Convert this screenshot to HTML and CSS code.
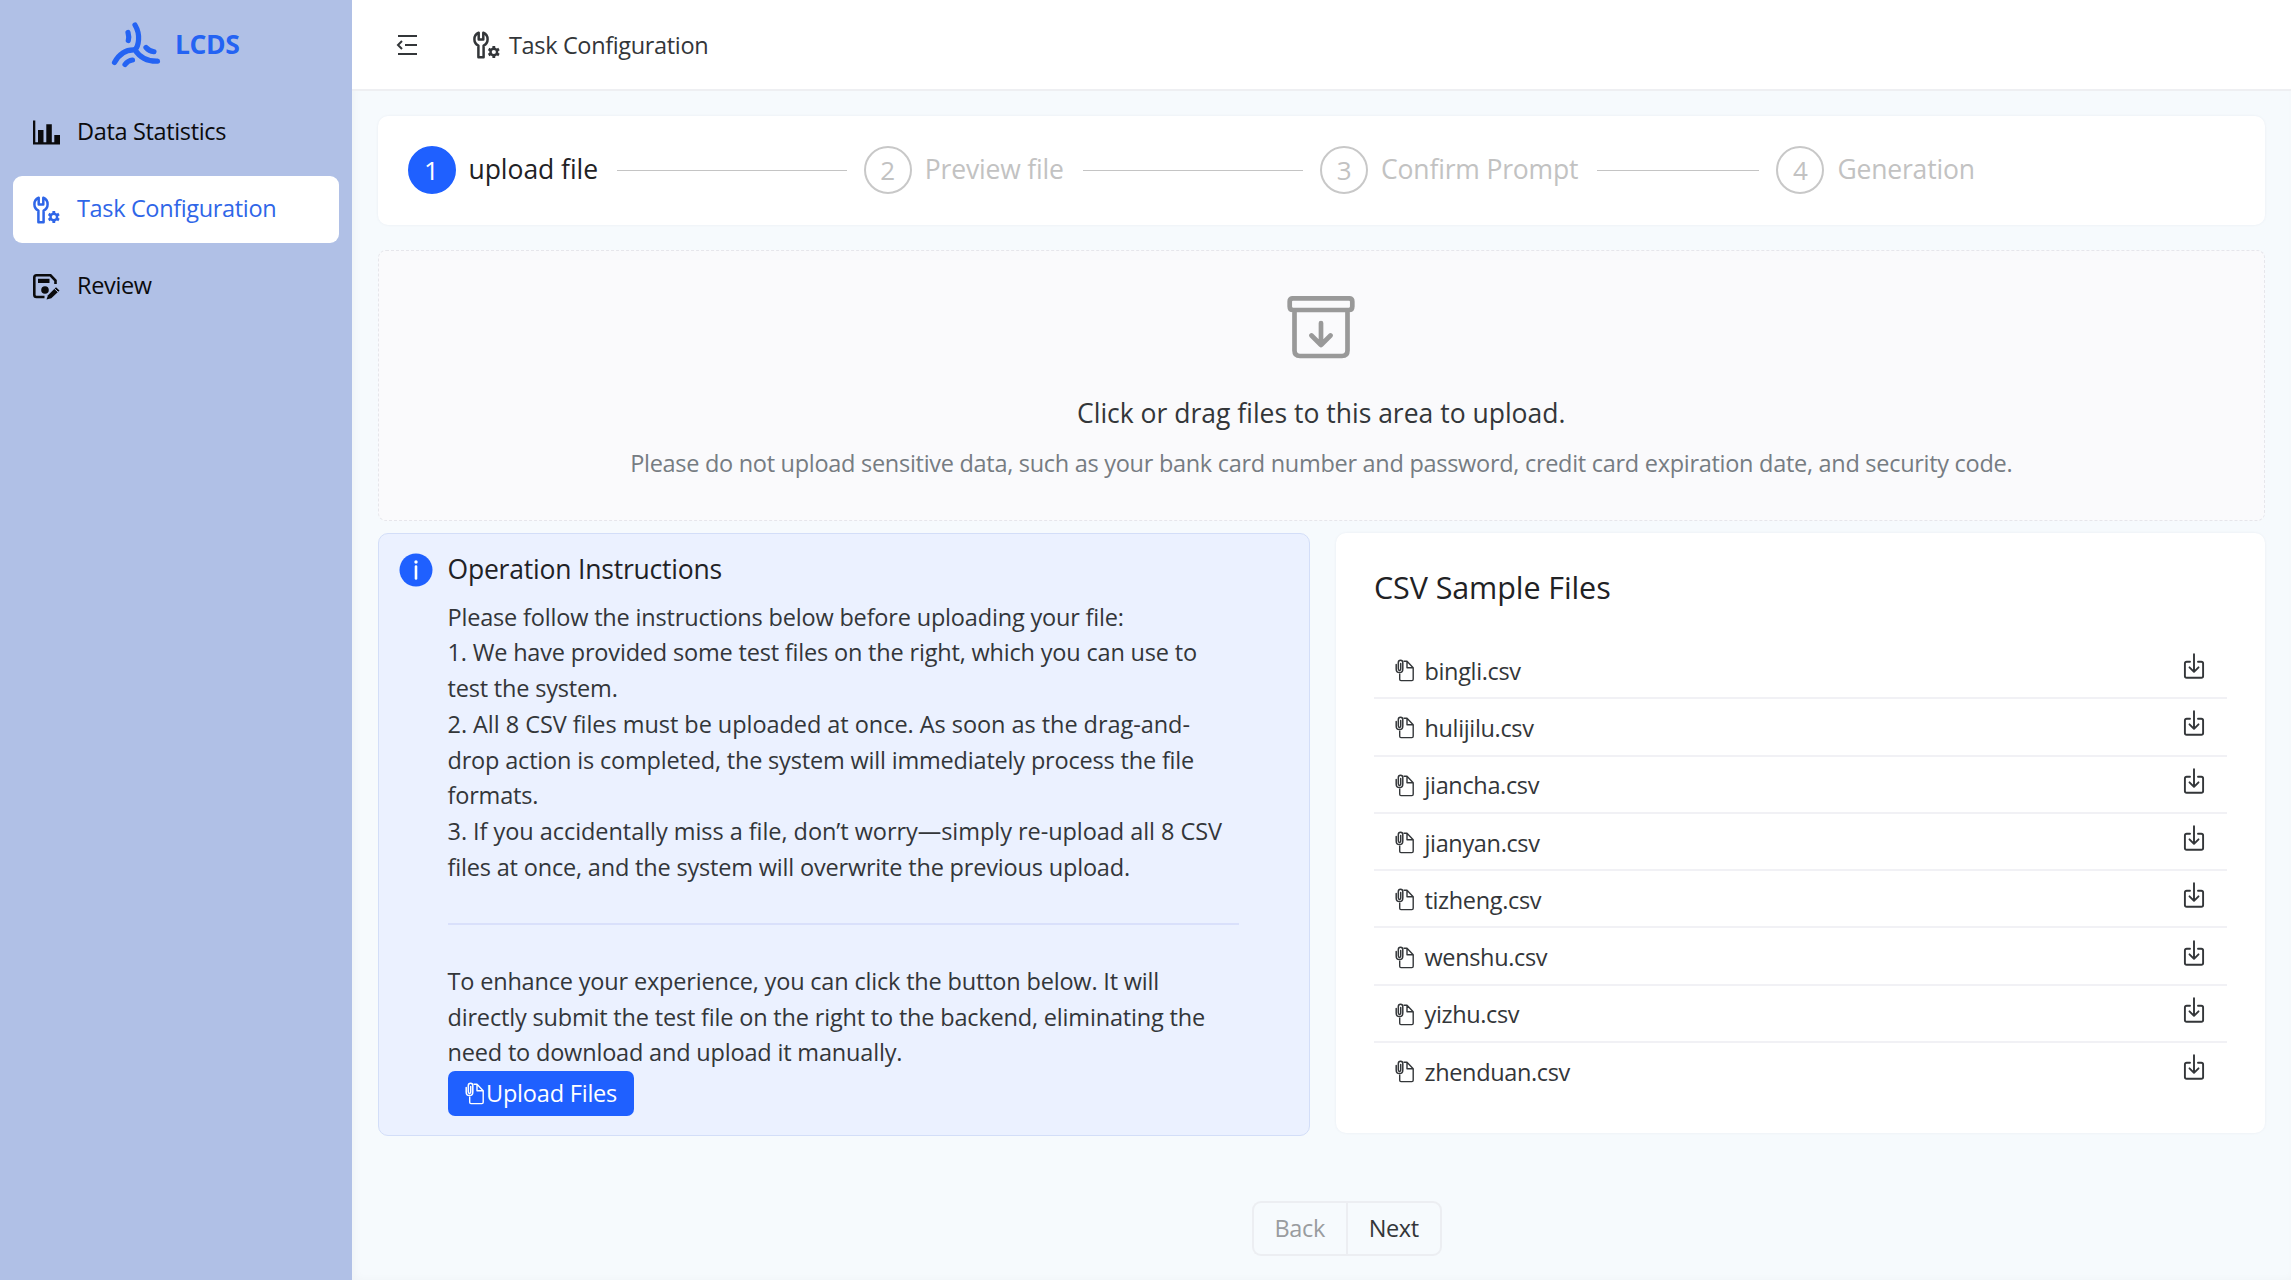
FILE: index.html
```html
<!DOCTYPE html>
<html lang="en">
<head>
<meta charset="utf-8">
<title>LCDS - Task Configuration</title>
<link rel="stylesheet" href="styles.css">
</head>
<body>
<svg class="defs" width="0" height="0" aria-hidden="true">
  <symbol id="wrench" viewBox="0 0 27 28">
    <path d="M5.4 26.2V14.6C2.9 13.3 1.4 11 1.4 8.2 1.4 5.400 3 2.900 5.700 1.700V8.600H10.300V1.700C13 2.900 14.600 5.400 14.600 8.200 14.600 11 13.100 13.300 10.600 14.600V26.200Z" fill="none" stroke="currentColor" stroke-width="2.5" stroke-linejoin="round"/>
    <circle cx="20.800" cy="21" r="3.300" fill="none" stroke="currentColor" stroke-width="2.400"/>
    <path d="M20.800 15V17.400M20.800 24.600V27M15.600 18L17.700 19.200M23.900 22.800L26 24M15.600 24L17.700 22.800M23.900 19.200L26 18" stroke="currentColor" stroke-width="2.800"/>
  </symbol>
  <symbol id="file" viewBox="0 0 20 23">
    <path d="M8.500 2.300H12L18.200 8.700V20.300Q18.200 21.600 16.900 21.600H6Q4.700 21.600 4.700 20.300V14.500M12 2.500V8.700H18" fill="none" stroke="currentColor" stroke-width="1.400" stroke-linejoin="round"/>
    <path d="M1.200 5.500V10C1.200 14.800 7.800 14.800 7.800 10V3.800C7.800.400 3.300 .400 3.300 3.800V9.800C3.300 12 5.700 12 5.700 9.800V4.500" fill="none" stroke="currentColor" stroke-width="1.500" stroke-linecap="round"/>
  </symbol>
  <symbol id="download" viewBox="0 0 22 27">
    <path d="M7 8.800H3.700Q1.900 8.800 1.900 10.600V22.900Q1.900 24.700 3.700 24.700H18.300Q20.100 24.700 20.100 22.900V10.600Q20.100 8.800 18.300 8.800H15M11 1.300V18.500M6.500 14.300L11 18.800L15.500 14.300" fill="none" stroke="currentColor" stroke-width="1.900" stroke-linecap="round" stroke-linejoin="round"/>
  </symbol>
</svg>
<div class="app">
  <aside class="sidebar">
    <div class="brand">
      <svg class="logo" viewBox="110 20 52 50"><path d="M135 25C141 35 138.500 46 135 50M114.500 62.500C120 52.500 127 49.500 135 50C141 59 149 61.500 157.500 61.200M128 32.500Q129.300 37 128.300 40.500M146 47.500Q149 51 154 51.700M125 64.500Q128 60.500 132.500 60" fill="none" stroke="currentColor" stroke-width="5.200" stroke-linecap="round"/></svg>
      <span class="brand-name">LCDS</span>
    </div>
    <nav class="menu">
      <a class="item"><svg class="mi" viewBox="0 0 27 28"><path d="M0 1.500H2.300V23.200H5V11H10.500V23.200H13.300V5.300H18.800V23.200H21.300V16H27V25.500H0Z" fill="currentColor"/></svg><span>Data Statistics</span></a>
      <a class="item active"><svg class="mi"><use href="#wrench"/></svg><span>Task Configuration</span></a>
      <a class="item"><svg class="mi" viewBox="0 0 27 28"><path d="M11.500 24H3.500Q1.300 24 1.300 21.800V4.500Q1.300 2.300 3.500 2.300H17.500L22.500 7.500V11" fill="none" stroke="currentColor" stroke-width="2.600"/><path d="M5 5.800H16.500V10H5Z" fill="currentColor"/><circle cx="12" cy="17" r="3.800" fill="currentColor"/><path d="M13.500 26.500L15 22.200L23 14.200L26.500 17.500L18.300 25.300Z" fill="currentColor"/><path d="M21.300 15.500L25 19" stroke="#b0c0e6" stroke-width="1"/></svg><span>Review</span></a>
    </nav>
  </aside>
  <div class="main">
    <header class="header">
      <svg class="collapse" viewBox="0 0 22 22"><path d="M2 2H21M9 11H21M2 20H21" stroke="currentColor" stroke-width="2.200"/><path d="M6 7L2 11L6 15" fill="none" stroke="currentColor" stroke-width="2"/></svg>
      <div class="crumb"><svg class="mi"><use href="#wrench"/></svg><span>Task Configuration</span></div>
    </header>
    <div class="content">
      <section class="steps card">
        <div class="step current"><b>1</b><span>upload file</span><i></i></div>
        <div class="step"><b>2</b><span>Preview file</span><i></i></div>
        <div class="step"><b>3</b><span>Confirm Prompt</span><i></i></div>
        <div class="step"><b>4</b><span>Generation</span></div>
      </section>
      <section class="dropzone">
        <svg class="box" viewBox="0 0 68 64"><path d="M6 2.300H62Q65.300 2.300 65.300 5.600V10.500Q65.300 14 62 14H6Q2.700 14 2.700 10.500V5.600Q2.700 2.300 6 2.300ZM7.500 14V54.500Q7.500 60 13 60H55Q60.500 60 60.500 54.500V14M34 27V49M24.500 39.500L34 49L43.500 39.500" fill="none" stroke="currentColor" stroke-width="4.700" stroke-linecap="round" stroke-linejoin="round"/></svg>
        <div class="drop-title">Click or drag files to this area to upload.</div>
        <div class="drop-note">Please do not upload sensitive data, such as your bank card number and password, credit card expiration date, and security code.</div>
      </section>
      <div class="columns">
        <section class="notice">
          <svg class="info" viewBox="0 0 34 34"><circle cx="17" cy="17" r="16.500" fill="#1f60ff"/><circle cx="17" cy="9" r="1.700" fill="#fff"/><path d="M17 13.500V25.500" stroke="#fff" stroke-width="2.600" stroke-linecap="round"/></svg>
          <div class="notice-body">
            <h2>Operation Instructions</h2>
            <p><span>Please follow the instructions below before uploading your file:</span><span>1. We have provided some test files on the right, which you can use to</span><span>test the system.</span><span class="loose">2. All 8 CSV files must be uploaded at once. As soon as the drag-and-</span><span>drop action is completed, the system will immediately process the file</span><span>formats.</span><span class="loose">3. If you accidentally miss a file, don’t worry—simply re-upload all 8 CSV</span><span>files at once, and the system will overwrite the previous upload.</span></p>
            <hr>
            <p><span>To enhance your experience, you can click the button below. It will</span><span>directly submit the test file on the right to the backend, eliminating the</span><span>need to download and upload it manually.</span></p>
            <button class="upload"><svg class="fi"><use href="#file"/></svg><span>Upload Files</span></button>
          </div>
        </section>
        <section class="samples card">
          <h2>CSV Sample Files</h2>
          <ul>
            <li><svg class="fi"><use href="#file"/></svg><span>bingli.csv</span><svg class="dl"><use href="#download"/></svg></li>
            <li><svg class="fi"><use href="#file"/></svg><span>hulijilu.csv</span><svg class="dl"><use href="#download"/></svg></li>
            <li><svg class="fi"><use href="#file"/></svg><span>jiancha.csv</span><svg class="dl"><use href="#download"/></svg></li>
            <li><svg class="fi"><use href="#file"/></svg><span>jianyan.csv</span><svg class="dl"><use href="#download"/></svg></li>
            <li><svg class="fi"><use href="#file"/></svg><span>tizheng.csv</span><svg class="dl"><use href="#download"/></svg></li>
            <li><svg class="fi"><use href="#file"/></svg><span>wenshu.csv</span><svg class="dl"><use href="#download"/></svg></li>
            <li><svg class="fi"><use href="#file"/></svg><span>yizhu.csv</span><svg class="dl"><use href="#download"/></svg></li>
            <li><svg class="fi"><use href="#file"/></svg><span>zhenduan.csv</span><svg class="dl"><use href="#download"/></svg></li>
          </ul>
        </section>
      </div>
      <div class="pager"><button class="back">Back</button><button class="next">Next</button></div>
    </div>
  </div>
</div>
</body>
</html>
```
FILE: styles.css
```css
* { box-sizing: border-box; }
body { margin: 0; font-family: "Open Sans", "Noto Sans", sans-serif; font-size: 23.5px; letter-spacing: -0.35px; color: #333639; background: #f6fafd; }
.defs { position: absolute; }
h2, p, ul { margin: 0; padding: 0; font-weight: 400; }
button { font: inherit; letter-spacing: inherit; margin: 0; padding: 0; }
svg { flex: none; display: block; }
.app { display: flex; width: 2291px; height: 1280px; overflow: hidden; }
.sidebar { width: 351.5px; flex: none; background: #b0c0e6; color: #0b0b0d; }
.brand { height: 90px; display: flex; align-items: center; padding-left: 110px; color: #2463f3; }
.logo { width: 52px; height: 50px; }
.brand-name { margin-left: 13px; padding-bottom: 3px; font-size: 26.5px; font-weight: 700; letter-spacing: -0.4px; }
.menu { padding: 9px 12.5px 0 13px; display: flex; flex-direction: column; gap: 10px; }
.item { height: 67px; display: flex; align-items: center; gap: 17px; padding-left: 20px; border-radius: 9px; white-space: nowrap; }
.item span { padding-bottom: 3px; }
.item.active { background: #fff; color: #2f66e8; }
.mi { width: 27px; height: 28px; }
.main { flex: 1; min-width: 0; display: flex; flex-direction: column; box-shadow: inset 3px 0 8px rgba(0, 0, 40, .03); }
.header { height: 90.5px; flex: none; background: #fff; border-bottom: 2px solid #eeeff2; display: flex; align-items: center; padding: 1px 0 0 44.5px; }
.collapse { width: 22px; height: 28px; }
.crumb { display: flex; align-items: center; margin-left: 55px; gap: 9px; }
.content { padding: 25px 26px 0; display: flex; flex-direction: column; }
.card { background: #fff; border-radius: 10px; box-shadow: 0 0 3px rgba(20, 40, 80, .06); }
.steps { height: 109px; display: flex; align-items: center; padding: 0 0 1px 30px; }
.step { width: 456.3px; display: flex; align-items: center; color: #c2c2c2; font-size: 26.5px; letter-spacing: -0.18px; white-space: nowrap; }
.step b { width: 48px; height: 48px; flex: none; border: 2px solid #c8c8c8; border-radius: 50%; font-weight: 400; font-size: 26px; display: flex; align-items: center; justify-content: center; letter-spacing: 0; }
.step span { margin-left: 13px; padding-bottom: 1px; }
.step i { flex: 1; height: 1.5px; background: #c4c4c4; margin: 2px 17px 0 19px; }
.step.current { color: #1f2225; letter-spacing: -0.05px; }
.step.current b { background: #1f60ff; border-color: #1f60ff; color: #fff; }
.dropzone { margin-top: 25px; height: 271px; background: #fafafc; border: 1.6px dashed #e6e6eb; border-radius: 8px; display: flex; flex-direction: column; align-items: center; white-space: nowrap; }
.box { width: 68px; height: 64px; margin-top: 45px; color: #999; }
.drop-title { margin-top: 33px; height: 40px; line-height: 40px; font-size: 26.5px; letter-spacing: 0; }
.drop-note { margin-top: 10px; height: 40px; line-height: 40px; color: #767c82; letter-spacing: -0.285px; }
.columns { display: flex; gap: 26px; margin-top: 12px; align-items: flex-start; }
.notice { width: 932px; height: 603.5px; background: #ebf1ff; border: 1.5px solid #d3def8; border-radius: 10px; display: flex; padding: 19px 0 0 20px; }
.info { width: 34px; height: 34px; }
.notice-body { margin-left: 15px; white-space: nowrap; }
.notice h2 { height: 34px; line-height: 32px; font-size: 26.5px; letter-spacing: -0.2px; color: #1f2225; }
.notice p { margin-top: 13px; line-height: 35.8px; letter-spacing: -0.18px; }
.notice p span { display: block; }
.notice p .loose { letter-spacing: -0.05px; }
.notice hr { width: 791px; height: 2px; border: 0; margin: 37.5px 0 38.5px; background: #d9e0fb; }
.notice hr + p { margin-top: 0; }
.upload { margin-top: 0; width: 186px; height: 45px; border: 0; border-radius: 7px; background: #1f60ff; color: #fff; display: flex; align-items: center; padding-left: 17.5px; gap: 1px; letter-spacing: -0.2px; }
.upload span { padding-bottom: 2px; }
.fi { width: 20px; height: 23px; }
.samples { flex: 1; height: 600px; padding: 33px 38.5px 0; }
.samples h2 { height: 42px; line-height: 42px; font-size: 30.5px; letter-spacing: -0.1px; color: #1f2225; }
.samples ul { list-style: none; margin-top: 34.5px; }
.samples li { height: 57.3px; border-bottom: 2px solid #f1f1f5; display: flex; align-items: center; padding: 2px 22px 0 20.5px; }
.samples li:last-child { border-bottom-color: transparent; }
.samples li span { margin-left: 10px; flex: 1; }
.dl { width: 22px; height: 27px; margin-top: -8px; }
.pager { align-self: center; display: flex; margin: 65px 0 0 51px; }
.pager button { height: 55px; background: transparent; border: 2px solid #eceef2; padding-bottom: 2px; }
.pager .back { width: 94px; border-radius: 9px 0 0 9px; border-right-width: 0; color: #999c9f; }
.pager .next { width: 96px; border-radius: 0 9px 9px 0; color: #333639; }
```
